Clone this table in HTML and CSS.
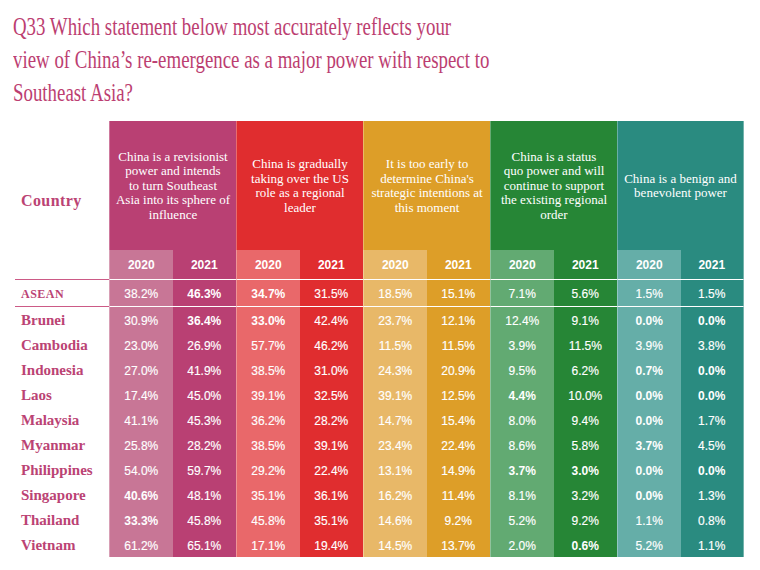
FILE: index.html
```html
<!DOCTYPE html>
<html>
<head>
<meta charset="utf-8">
<link rel="stylesheet" href="styles.css">
</head>
<body>
<div class="title">
  <span>Q33 Which statement below most accurately reflects your</span>
  <span>view of China’s re-emergence as a major power with respect to</span>
  <span>Southeast Asia?</span>
</div>
<div class="table">
  <div class="country-head">Country</div>
  <div class="desc g1">China is a revisionist<br>power and intends<br>to turn Southeast<br>Asia into its sphere of<br>influence</div>
  <div class="desc g2">China is gradually<br>taking over the US<br>role as a regional<br>leader</div>
  <div class="desc g3">It is too early to<br>determine China's<br>strategic intentions at<br>this moment</div>
  <div class="desc g4">China is a status<br>quo power and will<br>continue to support<br>the existing regional<br>order</div>
  <div class="desc g5">China is a benign and<br>benevolent power</div>

  <div class="row years">
    <div class="v a1">2020</div><div class="v b1">2021</div>
    <div class="v a2">2020</div><div class="v b2">2021</div>
    <div class="v a3">2020</div><div class="v b3">2021</div>
    <div class="v a4">2020</div><div class="v b4">2021</div>
    <div class="v a5">2020</div><div class="v b5">2021</div>
  </div>

  <div class="row asean">
    <div class="name">ASEAN</div>
    <div class="v a1">38.2%</div><div class="v b1 hi">46.3%</div>
    <div class="v a2 hi">34.7%</div><div class="v b2">31.5%</div>
    <div class="v a3">18.5%</div><div class="v b3">15.1%</div>
    <div class="v a4">7.1%</div><div class="v b4">5.6%</div>
    <div class="v a5">1.5%</div><div class="v b5">1.5%</div>
  </div>

  <div class="row">
    <div class="name">Brunei</div>
    <div class="v a1">30.9%</div><div class="v b1 hi">36.4%</div>
    <div class="v a2 hi">33.0%</div><div class="v b2">42.4%</div>
    <div class="v a3">23.7%</div><div class="v b3">12.1%</div>
    <div class="v a4">12.4%</div><div class="v b4">9.1%</div>
    <div class="v a5 hi">0.0%</div><div class="v b5 hi">0.0%</div>
  </div>

  <div class="row">
    <div class="name">Cambodia</div>
    <div class="v a1">23.0%</div><div class="v b1">26.9%</div>
    <div class="v a2">57.7%</div><div class="v b2">46.2%</div>
    <div class="v a3">11.5%</div><div class="v b3">11.5%</div>
    <div class="v a4">3.9%</div><div class="v b4">11.5%</div>
    <div class="v a5">3.9%</div><div class="v b5">3.8%</div>
  </div>

  <div class="row">
    <div class="name">Indonesia</div>
    <div class="v a1">27.0%</div><div class="v b1">41.9%</div>
    <div class="v a2">38.5%</div><div class="v b2">31.0%</div>
    <div class="v a3">24.3%</div><div class="v b3">20.9%</div>
    <div class="v a4">9.5%</div><div class="v b4">6.2%</div>
    <div class="v a5 hi">0.7%</div><div class="v b5 hi">0.0%</div>
  </div>

  <div class="row">
    <div class="name">Laos</div>
    <div class="v a1">17.4%</div><div class="v b1">45.0%</div>
    <div class="v a2">39.1%</div><div class="v b2">32.5%</div>
    <div class="v a3">39.1%</div><div class="v b3">12.5%</div>
    <div class="v a4 hi">4.4%</div><div class="v b4">10.0%</div>
    <div class="v a5 hi">0.0%</div><div class="v b5 hi">0.0%</div>
  </div>

  <div class="row">
    <div class="name">Malaysia</div>
    <div class="v a1">41.1%</div><div class="v b1">45.3%</div>
    <div class="v a2">36.2%</div><div class="v b2">28.2%</div>
    <div class="v a3">14.7%</div><div class="v b3">15.4%</div>
    <div class="v a4">8.0%</div><div class="v b4">9.4%</div>
    <div class="v a5 hi">0.0%</div><div class="v b5">1.7%</div>
  </div>

  <div class="row">
    <div class="name">Myanmar</div>
    <div class="v a1">25.8%</div><div class="v b1">28.2%</div>
    <div class="v a2">38.5%</div><div class="v b2">39.1%</div>
    <div class="v a3">23.4%</div><div class="v b3">22.4%</div>
    <div class="v a4">8.6%</div><div class="v b4">5.8%</div>
    <div class="v a5 hi">3.7%</div><div class="v b5">4.5%</div>
  </div>

  <div class="row">
    <div class="name">Philippines</div>
    <div class="v a1">54.0%</div><div class="v b1">59.7%</div>
    <div class="v a2">29.2%</div><div class="v b2">22.4%</div>
    <div class="v a3">13.1%</div><div class="v b3">14.9%</div>
    <div class="v a4 hi">3.7%</div><div class="v b4 hi">3.0%</div>
    <div class="v a5 hi">0.0%</div><div class="v b5 hi">0.0%</div>
  </div>

  <div class="row">
    <div class="name">Singapore</div>
    <div class="v a1 hi">40.6%</div><div class="v b1">48.1%</div>
    <div class="v a2">35.1%</div><div class="v b2">36.1%</div>
    <div class="v a3">16.2%</div><div class="v b3">11.4%</div>
    <div class="v a4">8.1%</div><div class="v b4">3.2%</div>
    <div class="v a5 hi">0.0%</div><div class="v b5">1.3%</div>
  </div>

  <div class="row">
    <div class="name">Thailand</div>
    <div class="v a1 hi">33.3%</div><div class="v b1">45.8%</div>
    <div class="v a2">45.8%</div><div class="v b2">35.1%</div>
    <div class="v a3">14.6%</div><div class="v b3">9.2%</div>
    <div class="v a4">5.2%</div><div class="v b4">9.2%</div>
    <div class="v a5">1.1%</div><div class="v b5">0.8%</div>
  </div>

  <div class="row">
    <div class="name">Vietnam</div>
    <div class="v a1">61.2%</div><div class="v b1">65.1%</div>
    <div class="v a2">17.1%</div><div class="v b2">19.4%</div>
    <div class="v a3">14.5%</div><div class="v b3">13.7%</div>
    <div class="v a4">2.0%</div><div class="v b4 hi">0.6%</div>
    <div class="v a5">5.2%</div><div class="v b5">1.1%</div>
  </div>
</div>
</body>
</html>
```

FILE: styles.css
```css
html, body {
  margin: 0;
  padding: 0;
  background: #ffffff;
}

body {
  width: 760px;
  height: 570px;
  overflow: hidden;
}

.title {
  margin: 10px 0 0 13px;
  width: 720px;
  color: #bc3e71;
  font-family: "Liberation Serif", serif;
  font-size: 24.5px;
  line-height: 33px;
  white-space: nowrap;
  transform: scaleX(0.77);
  transform-origin: 0 0;
}

.title span {
  display: block;
}

.table {
  margin-top: 12px;
  display: grid;
  grid-template-columns: 109px repeat(10, 63.5px);
  grid-template-rows: 129px 29px 28px repeat(10, 25px);
}

.row {
  display: contents;
}

.country-head {
  grid-row: 1 / span 2;
  grid-column: 1;
  display: flex;
  align-items: center;
  padding-left: 21px;
  padding-top: 2px;
  color: #bb4374;
  font-family: "Liberation Serif", serif;
  font-weight: bold;
  font-size: 16px;
  letter-spacing: 0.4px;
}

.desc {
  grid-column: span 2;
  display: flex;
  align-items: center;
  justify-content: center;
  text-align: center;
  color: #ffffff;
  font-family: "Liberation Serif", serif;
  font-size: 13px;
  line-height: 14.5px;
  padding: 1px 4px 0;
  border-left: 1px solid rgba(255, 255, 255, 0.3);
}

.years .a1 { grid-column: 2; }

.v {
  display: flex;
  align-items: center;
  justify-content: center;
  padding-top: 2px;
  color: #ffffff;
  font-family: "Liberation Sans", Arial, sans-serif;
  font-size: 12px;
  -webkit-text-stroke: 0.15px #ffffff;
}

.years .v {
  padding-top: 0;
  font-weight: bold;
  -webkit-text-stroke: 0;
}

.v.hi {
  font-weight: bold;
  -webkit-text-stroke: 0;
}

.name {
  display: flex;
  align-items: center;
  padding-left: 21px;
  padding-top: 2px;
  color: #bb4374;
  font-family: "Liberation Serif", serif;
  font-weight: bold;
  font-size: 15px;
}

.asean .name {
  margin-left: 15px;
  padding-left: 6px;
  font-size: 12px;
  letter-spacing: 0.5px;
  border-top: 1px solid #cc5a86;
  border-bottom: 1px solid #cc5a86;
}

.asean .v {
  border-top: 1px solid #ffffff;
  border-bottom: 1px solid #ffffff;
}

.a1, .a2, .a3, .a4, .a5 {
  border-left: 1px solid rgba(255, 255, 255, 0.3);
}

.b5, .g5 {
  border-right: 1px solid rgba(255, 255, 255, 0.35);
}

.g1 { background: #b94073; }
.g2 { background: #e02d2f; }
.g3 { background: #dd9e28; }
.g4 { background: #268636; }
.g5 { background: #2a8b80; }

.a1 { background: #c87696; }
.b1 { background: #b94073; }
.a2 { background: #e9686a; }
.b2 { background: #e02d2f; }
.a3 { background: #e8b868; }
.b3 { background: #dd9e28; }
.a4 { background: #62aa72; }
.b4 { background: #268636; }
.a5 { background: #65aea8; }
.b5 { background: #2a8b80; }
```
